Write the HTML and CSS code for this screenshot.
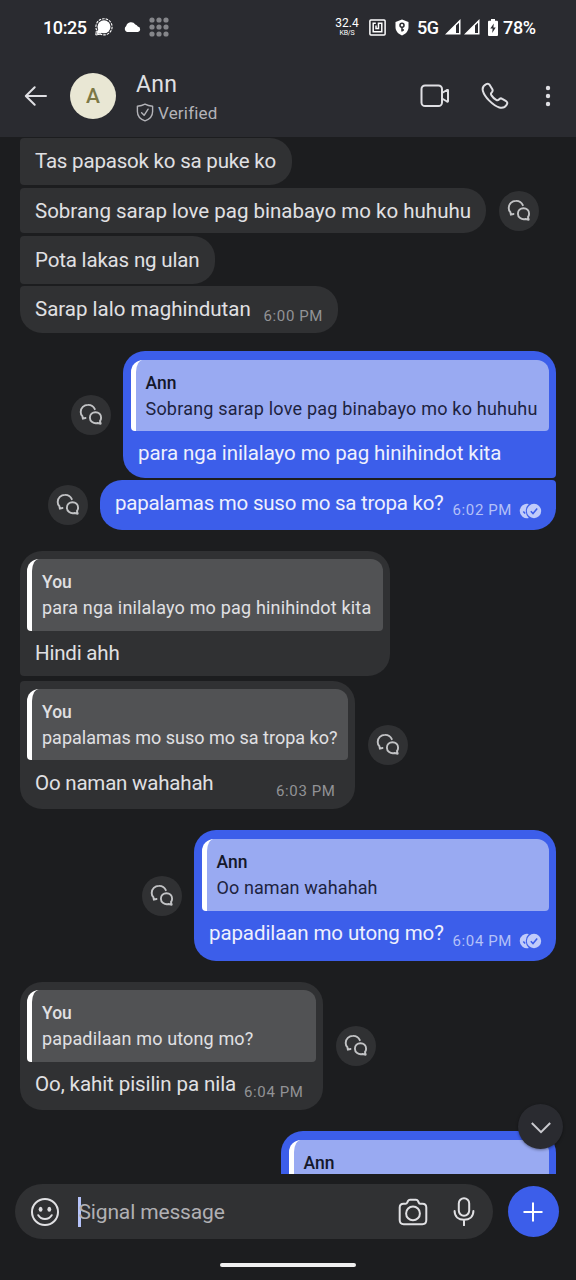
FILE: index.html
```html
<!DOCTYPE html>
<html lang="tl">
<head>
<meta charset="utf-8">
<title>Ann</title>
<link rel="stylesheet" href="styles.css">
</head>
<body>
<svg width="0" height="0" class="defs">
  <defs>
    <symbol id="replies" viewBox="0 0 24 24">
      <path d="M15.800 6.200A7.300 7.300 0 0 0 8.900 1.900C4.900 1.900 1.700 5 1.700 8.900C1.700 10.600 2.300 12.100 3.400 13.200L3.900 15.700L6.500 15"/>
      <path d="M21.700 20.700L18.600 20C14.300 21.100 10.900 18.200 10.900 14.700C10.900 11.500 13.400 9.200 16.500 9.200C19.700 9.200 22.100 11.600 22.100 14.700C22.100 16 21.700 17 21 17.900Z"/>
    </symbol>
    <symbol id="read" viewBox="0 0 23 16">
      <path d="M9.800 1A7.200 7.200 0 1 0 9.800 14.900A9.500 9.500 0 0 1 9.800 1Z" fill="#c0cbfa"/>
      <path d="M4.300 8.500L6.200 10.600" fill="none" stroke="#3c5eea" stroke-width="1.500"/>
      <circle cx="15" cy="8" r="7.200" fill="#c0cbfa"/>
      <path d="M11.800 8.300L14 10.600L18.200 5.500" fill="none" stroke="#3c5eea" stroke-width="1.500"/>
    </symbol>
  </defs>
</svg>
<div class="screen">
  <header class="top">
    <div class="status">
      <span class="clock">10:25</span>
      <svg class="s-signal" width="18" height="18" viewBox="0 0 18 18"><circle cx="9" cy="8.800" r="6.500" fill="#fff"/><path d="M3 11L1.800 16L7 15Z" fill="#fff"/><circle cx="9" cy="8.800" r="8.100" fill="none" stroke="#fff" stroke-width="1.100" stroke-dasharray="2.600 1"/><path d="M1.300 13L.8 17L5 16.200" fill="none" stroke="#fff"/></svg>
      <svg class="s-cloud" width="18" height="12" viewBox="0 0 18 12"><path d="M4 11A3.500 3.500 0 0 1 3.200 4.900A5 5 0 0 1 12.300 3.600A3.700 3.700 0 0 1 14.800 5.500A2.800 2.800 0 0 1 15 11Z" fill="#fff"/></svg>
      <svg class="s-dots" width="20" height="20" viewBox="0 0 20 20"><circle cx="3" cy="3" r="2.600"/><circle cx="10" cy="3" r="2.600"/><circle cx="17" cy="3" r="2.600"/><circle cx="3" cy="10" r="2.600"/><circle cx="10" cy="10" r="2.600"/><circle cx="17" cy="10" r="2.600"/><circle cx="3" cy="17" r="2.600"/><circle cx="10" cy="17" r="2.600"/><circle cx="17" cy="17" r="2.600"/></svg>
      <div class="rate"><span class="rate-n">32.4</span><span class="rate-u">KB/S</span></div>
      <svg class="s-nfc" width="17" height="17" viewBox="0 0 17 17" stroke="#fff" stroke-width="1.500"><rect x=".9" y=".9" width="15.200" height="15.200" rx="1"/><path d="M6.800 4.200H4.200V12.800H12.800V4.200H9.500V9.500H7V6.500"/></svg>
      <svg class="s-shield" width="14" height="17" viewBox="0 0 14 17"><path d="M7 .5L13.500 3V8C13.500 12 10.800 15 7 16.500C3.200 15 .5 12 .5 8V3Z" fill="#fff"/><circle cx="7" cy="6.200" r="2" fill="none" stroke="#2a2b30" stroke-width="1.500"/><path d="M7 8V12.500M7 11H9" stroke="#2a2b30" stroke-width="1.500"/></svg>
      <span class="net">5G</span>
      <svg class="s-bars" width="35" height="16" viewBox="0 0 35 16"><path d="M0 15.500L15.500 0V15.500ZM19 15.500L34.500 0V15.500Z" fill="#fff"/><path d="M11 6.500L14 3.700V14H11ZM30 6.500L33 3.700V14H30Z" fill="#2a2b30"/></svg>
      <svg class="s-batt" width="10" height="17" viewBox="0 0 10 17"><path d="M3 0H7V1.800H9Q10 1.800 10 3V16Q10 17 9 17H1Q0 17 0 16V3Q0 1.800 1 1.800H3Z" fill="#fff"/><path d="M5.800 4.500L2.300 9.600H4.600L4.200 14L7.700 8.600H5.400Z" fill="#2a2b30"/></svg>
      <span class="pct">78%</span>
    </div>
    <div class="bar">
      <svg class="back" width="24" height="22" viewBox="0 0 24 22"><path d="M22 11H2M10.700 2.200L1.800 11L10.700 19.800"/></svg>
      <div class="avatar">A</div>
      <div class="who">
        <div class="name">Ann</div>
        <div class="verified"><svg width="18" height="19" viewBox="0 0 18 19"><path d="M9 1.200C11.500 2.500 14 3 16.600 3.200V8.500C16.600 13 13.500 16.300 9 17.800C4.500 16.300 1.400 13 1.400 8.500V3.200C4 3 6.500 2.500 9 1.200Z"/><path d="M5.600 9.800L8.100 12.300L12.100 6.200"/></svg><span>Verified</span></div>
      </div>
      <svg class="video" width="30" height="24" viewBox="0 0 30 24"><rect x="1.500" y="1.500" width="20.500" height="20.500" rx="3.600"/><path d="M22 9L27 6Q28 5.600 28 6.500V17Q28 18 27 17.500L22 14.500"/></svg>
      <svg class="phone" width="28" height="28" viewBox="0 0 28 28"><path d="M5.200 2.200C6.500 1.400 7.800 1.600 8.700 2.900L11.200 7C12 8.400 11.800 9.400 10.700 10.400C9.700 11.300 9.700 12.200 10.500 13.400C11.700 15.300 13.200 16.800 15.200 17.900C16.300 18.500 17.100 18.400 17.900 17.500C18.900 16.300 19.900 16 21.200 16.800L24.700 18.800C26.500 19.900 26.700 21.200 25.700 22.800C24 25.500 21.500 26.400 18.300 25.500C15 24.500 11.500 21.900 8 18.400C4.800 15 2.700 11.700 1.900 8.900C1.100 6 2.200 3.700 5.200 2.200Z"/></svg>
      <svg class="more" width="6" height="22" viewBox="0 0 6 22"><circle cx="3" cy="3" r="2.200"/><circle cx="3" cy="11" r="2.200"/><circle cx="3" cy="19" r="2.200"/></svg>
    </div>
  </header>

  <main class="chat">
    <div class="row r1"><div class="bubble in first w272"><p class="line"><span class="msg m1">Tas papasok ko sa puke ko</span></p></div></div>
    <div class="row r2"><div class="bubble in mid w466"><p class="line"><span class="msg m2">Sobrang sarap love pag binabayo mo ko huhuhu</span></p></div><div class="reply"><svg><use href="#replies"/></svg></div></div>
    <div class="row r3"><div class="bubble in mid w195"><p class="line"><span class="msg m3">Pota lakas ng ulan</span></p></div></div>
    <div class="row r4"><div class="bubble in last w318"><p class="line"><span class="msg m4">Sarap lalo maghindutan</span><time>6:00 PM</time></p></div></div>

    <div class="row out-row r5"><div class="reply"><svg><use href="#replies"/></svg></div><div class="bubble out first quoted w433"><div class="quote"><b>Ann</b><span class="q1">Sobrang sarap love pag binabayo mo ko huhuhu</span></div><p class="line"><span class="msg m5">para nga inilalayo mo pag hinihindot kita</span></p></div></div>
    <div class="row out-row r6"><div class="reply"><svg><use href="#replies"/></svg></div><div class="bubble out last w456"><p class="line"><span class="msg m6">papalamas mo suso mo sa tropa ko?</span><time>6:02 PM</time><svg class="read"><use href="#read"/></svg></p></div></div>

    <div class="row r7"><div class="bubble in first quoted w370"><div class="quote"><b>You</b><span class="q2">para nga inilalayo mo pag hinihindot kita</span></div><p class="line"><span class="msg m7">Hindi ahh</span></p></div></div>
    <div class="row r8"><div class="bubble in last quoted w335"><div class="quote"><b>You</b><span class="q3">papalamas mo suso mo sa tropa ko?</span></div><p class="line"><span class="msg m8">Oo naman wahahah</span><time>6:03 PM</time></p></div><div class="reply"><svg><use href="#replies"/></svg></div></div>

    <div class="row out-row r9"><div class="reply"><svg><use href="#replies"/></svg></div><div class="bubble out quoted w362"><div class="quote"><b>Ann</b><span class="q4">Oo naman wahahah</span></div><p class="line"><span class="msg m9">papadilaan mo utong mo?</span><time>6:04 PM</time><svg class="read"><use href="#read"/></svg></p></div></div>

    <div class="row r10"><div class="bubble in quoted w303"><div class="quote"><b>You</b><span class="q5">papadilaan mo utong mo?</span></div><p class="line"><span class="msg m10">Oo, kahit pisilin pa nila</span><time>6:04 PM</time></p></div><div class="reply"><svg><use href="#replies"/></svg></div></div>

    <div class="row out-row r11"><div class="bubble out quoted w275"><div class="quote"><b>Ann</b></div></div></div>
  </main>

  <div class="jump"><svg width="22" height="14" viewBox="0 0 22 14"><path d="M1.800 2L11 11.200L20.200 2"/></svg></div>

  <footer class="compose">
    <div class="field">
      <svg class="emoji" width="30" height="30" viewBox="0 0 30 30"><circle cx="15" cy="15" r="13"/><path d="M8.300 18.200C11.500 23.200 18.500 23.200 21.700 18.200"/><ellipse cx="10.600" cy="12.200" rx="1.900" ry="2.500"/><ellipse cx="19.300" cy="12.200" rx="1.900" ry="2.500"/></svg>
      <span class="caret"></span>
      <span class="hint">Signal message</span>
      <svg class="camera" width="30" height="28" viewBox="0 0 30 28"><path d="M5.500 5.800H7.500Q8.700 5.800 9.200 4.700L10 3Q10.600 1.800 12 1.800H18Q19.400 1.800 20 3L20.800 4.700Q21.300 5.800 22.500 5.800H24.500Q28.300 5.800 28.300 9.600V22Q28.300 26.200 24.300 26.200H5.700Q1.700 26.200 1.700 22V9.600Q1.700 5.800 5.500 5.800Z"/><circle cx="15" cy="15.400" r="6.900"/></svg>
      <svg class="mic" width="22" height="29" viewBox="0 0 22 29"><rect x="5.800" y="1.300" width="10.400" height="17.400" rx="5.200"/><path d="M1.600 14C1.600 19.500 5.500 22.800 11 22.800C16.500 22.800 20.400 19.500 20.400 14M11 22.800V28.300"/></svg>
    </div>
    <div class="add"><svg width="20" height="20" viewBox="0 0 20 20"><path d="M10 .5V19.500M.5 10H19.500"/></svg></div>
  </footer>
  <div class="home"></div>
</div>
</body>
</html>
```
FILE: styles.css
```css
* { box-sizing: border-box; }
body { margin: 0; background: #1c1d1f; font-family: Roboto, "Noto Sans", sans-serif; }
svg { display: block; flex: none; fill: none; }
.defs { position: absolute; }
.screen { position: relative; width: 576px; height: 1280px; overflow: hidden; display: flex; flex-direction: column; background: #1c1d1f; color: #e0e0e3; white-space: nowrap; }

/* header */
.top { height: 137px; flex: none; background: #2a2b30; }
.status { height: 56px; padding: 0 0 2px 43px; display: flex; align-items: center; color: #fff; }
.clock { width: 52px; font-size: 18px; font-weight: 500; letter-spacing: -.4px; }
.s-cloud { margin-left: 10px; }
.s-dots { margin-left: 8px; fill: #85868a; }
.rate { width: 24px; margin-left: 166px; display: flex; flex-direction: column; align-items: center; }
.rate-n { font-size: 12px; line-height: 11px; }
.rate-u { font-size: 7px; line-height: 8px; letter-spacing: -.2px; }
.s-nfc { margin-left: 10px; }
.s-shield { margin-left: 9px; }
.net { width: 28px; margin-left: 8px; font-size: 18px; font-weight: 500; letter-spacing: -.4px; }
.s-batt { margin-left: 8px; }
.pct { margin-left: 5px; font-size: 18px; font-weight: 500; letter-spacing: -.3px; }

.bar { height: 81px; padding: 0 0 2px 24px; display: flex; align-items: center; }
.bar svg { stroke: #dfdfe3; stroke-width: 2; stroke-linejoin: round; stroke-linecap: round; }
.avatar { width: 46px; height: 46px; margin-left: 22px; border-radius: 50%; background: #e9e7d4; color: #7c7845; font-size: 21px; font-weight: 500; line-height: 46px; text-align: center; }
.who { width: 284px; margin-left: 20px; padding-top: 6px; }
.name { font-size: 23px; line-height: 28px; letter-spacing: .3px; }
.verified { display: flex; gap: 4px; height: 27px; align-items: center; font-size: 17px; letter-spacing: .2px; color: #b3b3b8; }
.bar .verified svg { stroke: #b3b3b8; stroke-width: 1.400; }
.phone { margin-left: 31px; }
.bar .more { margin-left: 36px; stroke: none; fill: #dfdfe3; }

/* conversation */
.chat { height: 1037px; flex: none; padding: 1px 20px 0; overflow: hidden; }
.row { display: flex; align-items: center; gap: 13px; }
.out-row { justify-content: flex-end; gap: 12.500px; }
.bubble { flex: none; height: 100%; border-radius: 22px; background: #303133; padding-top: 11px; }
.line { margin: 0 15px; display: flex; line-height: 24px; }
.msg { font-size: 20.500px; }
time { align-self: flex-start; margin: 9px 0 0 auto; font-size: 15px; line-height: 20px; letter-spacing: .600px; color: #929396; }
.in.first { border-bottom-left-radius: 4px; }
.in.mid, .r1 .in { border-top-left-radius: 4px; border-bottom-left-radius: 4px; }
.in.last { border-top-left-radius: 4px; }
.out { background: #3c5eea; color: #eef0fd; }
.out.first { border-bottom-right-radius: 4px; }
.out.last { border-top-right-radius: 4px; }
.out time { color: #b4c1f8; }
.read { width: 23px; height: 16px; margin: 12px -1px 0 7px; }
.quoted { padding-top: 8px; }
.quoted time { margin-top: 10px; }
.in.quoted time { margin-right: 4.500px; }
.quote { height: 72px; margin: 0 7px 10px; padding: 10px 0 0 10px; border-left: 5px solid #fff; border-radius: 12px 12px 4px 4px; background: #515254; display: flex; flex-direction: column; font-size: 18px; line-height: 26px; }
.out .quote { margin: 1px 7px 10px 7.500px; background: #99aaf2; color: #1d2340; }
.quote b { font-weight: 500; font-size: 17.500px; }
.out .quote b { color: #14182b; }
.reply { width: 40px; height: 40px; flex: none; border-radius: 50%; background: #303133; display: flex; align-items: center; justify-content: center; }
.reply svg { width: 24px; height: 24px; stroke: #c2c3c5; stroke-width: 1.900; stroke-linejoin: round; stroke-linecap: round; }

/* per-message tracking */
.m1 { letter-spacing: -.2px; }
.m3 { letter-spacing: -.17px; }
.m5 { letter-spacing: -.085px; }
.m6 { letter-spacing: -.24px; }
.m7, .m8 { letter-spacing: -.2px; }
.m9 { letter-spacing: -.1px; }
.m10 { letter-spacing: -.08px; }
.q1 { letter-spacing: .21px; }
.q2 { letter-spacing: .18px; }
.q4 { letter-spacing: .1px; }
.q5 { letter-spacing: .14px; }

.w195 { width: 195px; } .w272 { width: 272px; } .w275 { width: 275px; } .w303 { width: 303px; }
.w318 { width: 318px; } .w335 { width: 335px; } .w362 { width: 362px; } .w370 { width: 369.500px; }
.w433 { width: 433px; } .w456 { width: 456px; } .w466 { width: 466px; }

.r1 { height: 47px; }
.r2 { height: 45px; margin-top: 3px; }
.r3 { height: 48px; margin-top: 3px; }
.r3 .bubble { padding-top: 12px; }
.r4 { height: 47px; margin-top: 2px; }
.r5 { height: 127px; margin-top: 18px; }
.r5 .quote { height: 71px; }
.r6 { height: 50px; margin-top: 2px; }
.r7 { height: 125px; margin-top: 21px; }
.r8 { height: 128px; margin-top: 5px; }
.r8 .quote { height: 71px; margin-bottom: 11px; }
.r9 { height: 131px; margin-top: 21px; }
.r10 { height: 128px; margin-top: 21px; }
.r10 .bubble { padding-top: 7.500px; }
.r11 { height: 130px; margin-top: 21px; }

/* floating scroll button */
.jump { position: absolute; left: 518px; top: 1104px; width: 45px; height: 45px; border-radius: 50%; background: #2a2b30; box-shadow: 0 1px 3px #0006; display: flex; align-items: center; justify-content: center; padding-top: 2px; }
.jump svg { stroke: #c9c9ce; stroke-width: 2; }

/* composer */
.compose { height: 75px; flex: none; padding: 0 17.500px 0 15px; display: flex; align-items: center; justify-content: space-between; }
.field { width: 478px; height: 55px; border-radius: 28px; background: #303133; display: flex; align-items: center; padding-left: 15px; }
.field svg { stroke: #e0e0e3; stroke-width: 2; stroke-linecap: round; stroke-linejoin: round; }
.emoji ellipse { fill: #e0e0e3; stroke: none; }
.field .emoji ellipse { stroke: none; }
.caret { width: 2.500px; height: 30px; margin-left: 18px; background: #b6c3fa; }
.hint { width: 319px; margin-left: -2px; font-size: 21px; letter-spacing: -.15px; color: #b0b0b4; }
.mic { margin-left: 25px; }
.add { width: 51px; height: 51px; border-radius: 50%; background: #3c5eea; display: flex; align-items: center; justify-content: center; }
.add svg { stroke: #fff; stroke-width: 2; }
.home { width: 136px; height: 4px; margin: 14px auto 0; border-radius: 2px; background: #f0f0f0; }
```
